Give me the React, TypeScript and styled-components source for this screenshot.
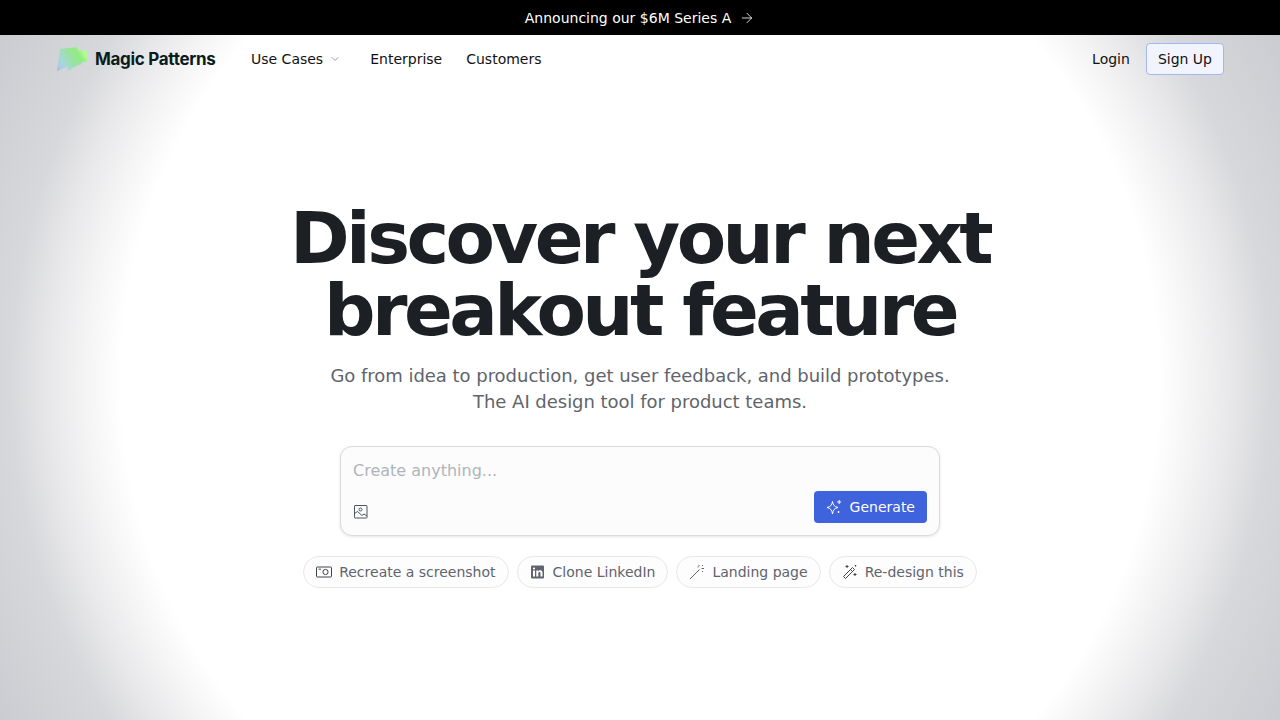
import styled, { createGlobalStyle } from "styled-components";
import { ArrowRight, ChevronDown } from "lucide-react";

const GlobalStyle = createGlobalStyle`
  html, body { margin: 0; padding: 0; height: 100%; }
  body {
    font-family: "DejaVu Sans", sans-serif;
    background: radial-gradient(
      circle 726px at 640px 380px,
      #fff 71.5%,
      #f4f4f5 76.4%,
      #e8e8ea 81.3%,
      #d7d8db 86.8%,
      #cbccd1 100%
    );
    overflow: hidden;
  }
  * { box-sizing: border-box; }
`;

const Page = styled.div`
  width: 1280px;
  height: 720px;
  display: flex;
  flex-direction: column;
  align-items: center;
`;

const Banner = styled.div`
  width: 100%;
  height: 35px;
  background: #000;
  color: #fff;
  font-size: 14px;
  display: flex;
  align-items: center;
  justify-content: center;
  gap: 8px;
`;

const Nav = styled.nav`
  width: 100%;
  height: 48px;
  padding: 0 56px;
  display: flex;
  align-items: center;
`;

const LogoWrap = styled.div`
  display: flex;
  align-items: center;
  gap: 6px;
  width: 195px;
`;

const LogoText = styled.span`
  font-family: Inter, sans-serif;
  font-weight: 700;
  font-size: 17px;
  letter-spacing: -0.3px;
  color: #0a1c1c;
`;

const NavLinks = styled.div`
  display: flex;
  align-items: center;
  gap: 24px;
`;

const NavLink = styled.a`
  font-size: 14px;
  color: #111;
  display: flex;
  align-items: center;
  gap: 6px;
`;

const Chevron = styled(ChevronDown)`
  color: #6e6ade;
  margin-right: 5px;
`;

const Actions = styled.div`
  margin-left: auto;
  display: flex;
  align-items: center;
  gap: 16px;
`;

const SignUp = styled.button`
  height: 32px;
  padding: 0 11px;
  font: inherit;
  font-size: 14px;
  color: #111;
  background: #f1f4fd;
  border: 1px solid #a3b6f5;
  border-radius: 4px;
`;

const Hero = styled.main`
  display: flex;
  flex-direction: column;
  align-items: center;
  padding-top: 119px;
`;

const Title = styled.h1`
  margin: 0;
  font-size: 72px;
  line-height: 72px;
  font-weight: 700;
  letter-spacing: -3.6px;
  text-align: center;
  color: #1c2024;
`;

const Subtitle = styled.p`
  margin: 17px 0 0;
  font-size: 18px;
  line-height: 26px;
  letter-spacing: -0.03px;
  text-align: center;
  color: #60646c;
`;

const Prompt = styled.div`
  margin-top: 31px;
  width: 600px;
  height: 90px;
  padding: 12px;
  background: #fcfcfd;
  border: 1px solid #d9d9e0;
  border-radius: 12px;
  box-shadow: 0 1px 3px rgba(0, 0, 0, 0.1);
  display: flex;
  flex-direction: column;
  justify-content: space-between;
`;

const Placeholder = styled.div`
  font-size: 16px;
  line-height: 24px;
  color: #b0b4ba;
`;

const PromptFooter = styled.div`
  display: flex;
  align-items: flex-end;
  justify-content: space-between;
`;

const UploadButton = styled.span`
  display: flex;
  margin-bottom: 3px;
`;

const Generate = styled.button`
  height: 32px;
  padding: 0 12px;
  display: flex;
  align-items: center;
  gap: 8px;
  font: inherit;
  font-size: 14px;
  color: #fff;
  background: #3e63dd;
  border: 0;
  border-radius: 4px;
`;

const Chips = styled.div`
  margin-top: 20px;
  display: flex;
  gap: 8px;
`;

const Chip = styled.button`
  height: 32px;
  padding: 0 12px;
  display: flex;
  align-items: center;
  gap: 7px;
  font: inherit;
  font-size: 14px;
  color: #60646c;
  background: #fdfdfe;
  border: 1px solid #e8e8ec;
  border-radius: 16px;
`;

const LogoMark = () => (
  <svg width="33" height="25" viewBox="0 0 33 25">
    <defs>
      <linearGradient id="mark" x1="0" y1="1" x2="1" y2="0.5">
        <stop offset="0" stopColor="#c59ade" />
        <stop offset="0.12" stopColor="#b0c8ea" />
        <stop offset="0.3" stopColor="#a5d8d8" />
        <stop offset="0.55" stopColor="#9ce0a8" />
        <stop offset="0.85" stopColor="#90ee80" />
        <stop offset="1" stopColor="#b4fa94" />
      </linearGradient>
    </defs>
    <path d="M4 2 L21 0 L22 3 L31 4 L32 14 L26 15 L26 17 L20 19 L12 24 L11 20 L1 24 Z" fill="url(#mark)" />
  </svg>
);

const UploadIcon = () => (
  <svg width="16" height="16" viewBox="0 0 16 16" fill="none" stroke="#50545c" strokeWidth="1">
    <rect x="1.5" y="1.5" width="12.5" height="12.5" rx="0.5" />
    <circle cx="7.5" cy="5.5" r="1.5" />
    <path d="M1.5 9.5 L4.5 7.5 L9 11.5 L11 10 L14 12" />
  </svg>
);

const SparkleIcon = () => (
  <svg width="16" height="16" viewBox="0 0 16 16" fill="none" stroke="#fff" strokeWidth="1" strokeLinejoin="round">
    <path d="M6.5 2.5 C7 6 8.5 7.8 12 8.5 C8.5 9.2 7 11 6.5 15 C6 11 4.5 9.2 1 8.5 C4.5 7.8 6 6 6.5 2.5 Z" />
    <path d="M13.2 1v4M11.2 3h4" />
    <path d="M12.5 12v2M11.5 13h2" />
  </svg>
);

const CameraIcon = () => (
  <svg width="16" height="16" viewBox="0 0 16 16" fill="none" stroke="#40444c" strokeWidth="1">
    <rect x="0.5" y="3" width="15" height="10" rx="1" />
    <circle cx="9.5" cy="8" r="2.6" />
    <path d="M2.5 5.2h2.5" />
  </svg>
);

const LinkedInIcon = () => (
  <svg width="16" height="16" viewBox="0 0 16 16">
    <rect x="1" y="1.5" width="13" height="13" rx="1" fill="#60646c" />
    <rect x="3" y="6.5" width="2" height="6" fill="#fff" />
    <circle cx="4" cy="4.5" r="1.1" fill="#fff" />
    <path d="M6.3 6.5h1.9v.9c.4-.6 1.1-1.1 2.1-1.1 1.7 0 2.2 1.1 2.2 2.7v3.5h-2V9.4c0-.9-.2-1.4-1-1.4s-1.2.6-1.2 1.5v3h-2z" fill="#fff" />
  </svg>
);

const WandThin = () => (
  <svg width="16" height="16" viewBox="0 0 16 16" fill="none" stroke="#60646c" strokeWidth="1">
    <path d="M1 15 L10.5 5.5" />
    <path d="M10 1v1.5M13.5 1v1M12.5 4.5h2.5M13.5 7v1M8.5 3h1" />
  </svg>
);

const WandBold = () => (
  <svg width="16" height="16" viewBox="0 0 16 16" fill="none" stroke="#40444c" strokeWidth="1">
    <path d="M1.5 12.5 L10.5 3.5 L12.5 5.5 L3.5 14.5 Z" />
    <path d="M8.5 5.5l2 2" />
    <path d="M5 1v3M3.5 2.5h3M13 9v3M11.5 10.5h3M13.5 1v1.5M12.7 1.7h1.6" />
  </svg>
);

const App = () => {
  return (
    <Page>
      <GlobalStyle />
      <Banner>
        Announcing our $6M Series A
        <ArrowRight size={16} strokeWidth={1.25} />
      </Banner>
      <Nav>
        <LogoWrap>
          <LogoMark />
          <LogoText>Magic Patterns</LogoText>
        </LogoWrap>
        <NavLinks>
          <NavLink>
            Use Cases
            <Chevron size={12} strokeWidth={1.5} />
          </NavLink>
          <NavLink>Enterprise</NavLink>
          <NavLink>Customers</NavLink>
        </NavLinks>
        <Actions>
          <NavLink>Login</NavLink>
          <SignUp>Sign Up</SignUp>
        </Actions>
      </Nav>
      <Hero>
        <Title>
          Discover your next
          <br />
          breakout feature
        </Title>
        <Subtitle>
          Go from idea to production, get user feedback, and build prototypes.
          <br />
          The AI design tool for product teams.
        </Subtitle>
        <Prompt>
          <Placeholder>Create anything...</Placeholder>
          <PromptFooter>
            <UploadButton>
              <UploadIcon />
            </UploadButton>
            <Generate>
              <SparkleIcon />
              Generate
            </Generate>
          </PromptFooter>
        </Prompt>
        <Chips>
          <Chip>
            <CameraIcon />
            Recreate a screenshot
          </Chip>
          <Chip>
            <LinkedInIcon />
            Clone LinkedIn
          </Chip>
          <Chip>
            <WandThin />
            Landing page
          </Chip>
          <Chip>
            <WandBold />
            Re-design this
          </Chip>
        </Chips>
      </Hero>
    </Page>
  );
};

export default App;
